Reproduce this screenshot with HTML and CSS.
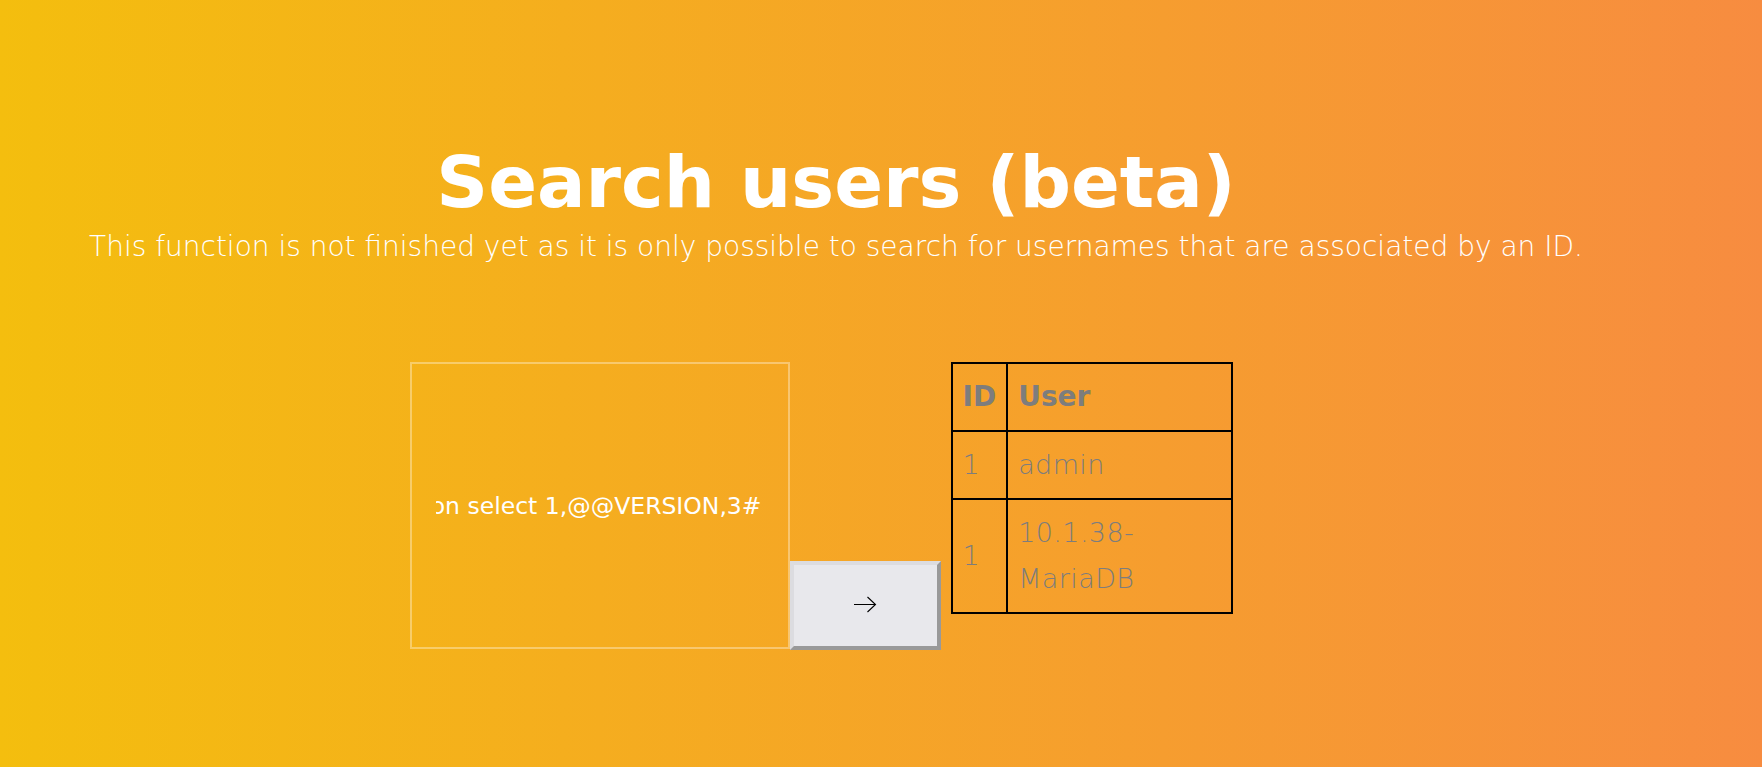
FILE: index.html
```html
<!DOCTYPE html>
<html lang="en">
<head>
<meta charset="utf-8">
<title>Search users (beta)</title>
<link rel="stylesheet" href="styles.css">
</head>
<body>
<main class="page">
  <header class="intro">
    <h1 class="intro-title">Search users (beta)</h1>
    <p class="intro-text">This function is not finished yet as it is only possible to search for usernames that are associated by an ID.</p>
  </header>
  <section class="search">
    <form class="search-form">
      <div class="field">
        <div class="field-clip"><span class="field-value">1' union select 1,@@VERSION,3#</span></div>
      </div>
      <button type="button" class="search-btn" aria-label="Search">
        <svg class="search-arrow" width="24" height="18" viewBox="0 0 24 18" aria-hidden="true">
          <path d="M1 9.5 H22.5 M14.5 2 L22.5 9.5 L14.5 17" fill="none" stroke="#000" stroke-width="1.1"/>
        </svg>
      </button>
    </form>
    <table class="results">
      <thead>
        <tr><th class="col-id">ID</th><th>User</th></tr>
      </thead>
      <tbody>
        <tr><td>1</td><td>admin</td></tr>
        <tr><td>1</td><td>10.1.38-MariaDB</td></tr>
      </tbody>
    </table>
  </section>
</main>
</body>
</html>
```
FILE: styles.css
```css
html, body {
  margin: 0;
  padding: 0;
}
body {
  height: 767px;
  overflow: hidden;
  background: linear-gradient(90deg, #f4be0e 0%, #f78c40 100%);
  font-family: "DejaVu Sans", sans-serif;
  color: #fff;
}
.page {
  width: 1672px;
  padding-top: 142px;
}
.intro {
  text-align: center;
}
.intro-title {
  margin: 0;
  font-size: 72px;
  font-weight: bold;
  line-height: 80px;
}
.intro-text {
  margin: 6px 0 0;
  font-size: 28px;
  font-weight: 200;
  line-height: 38px;
}
.search {
  display: flex;
  justify-content: center;
  align-items: flex-start;
  gap: 10px;
  margin-top: 96px;
  padding-right: 30px;
}
.search-form {
  display: flex;
  align-items: flex-end;
  margin: 0;
}
.field {
  box-sizing: border-box;
  width: 380px;
  height: 287px;
  border: 2px solid rgba(255, 255, 255, 0.35);
  padding: 0 26px 0 24px;
  display: flex;
  align-items: center;
}
.field-clip {
  flex: 1;
  overflow: hidden;
  display: flex;
  justify-content: flex-end;
  white-space: nowrap;
}
.field-value {
  font-size: 23.5px;
  line-height: 30px;
}
.search-btn {
  box-sizing: border-box;
  width: 151px;
  height: 89px;
  margin: 0 0 -1px;
  padding: 0 0 4px;
  border-style: solid;
  border-width: 4px;
  border-color: #dcdce0 #999 #999 #dcdce0;
  background: #e8e8ec;
  display: flex;
  align-items: center;
  justify-content: center;
}
.search-arrow {
  display: block;
}
.results {
  width: 282px;
  border: 1px solid #000;
  border-spacing: 0;
  color: #7d7d7d;
  font-size: 27px;
}
.results th,
.results td {
  border: 1px solid #000;
  padding: 10px;
  line-height: 46px;
  text-align: left;
  vertical-align: middle;
  font-weight: 200;
  letter-spacing: 0.4px;
}
.results th {
  font-size: 28px;
  font-weight: bold;
  letter-spacing: 0;
}
.results .col-id {
  width: 30px;
}
```
